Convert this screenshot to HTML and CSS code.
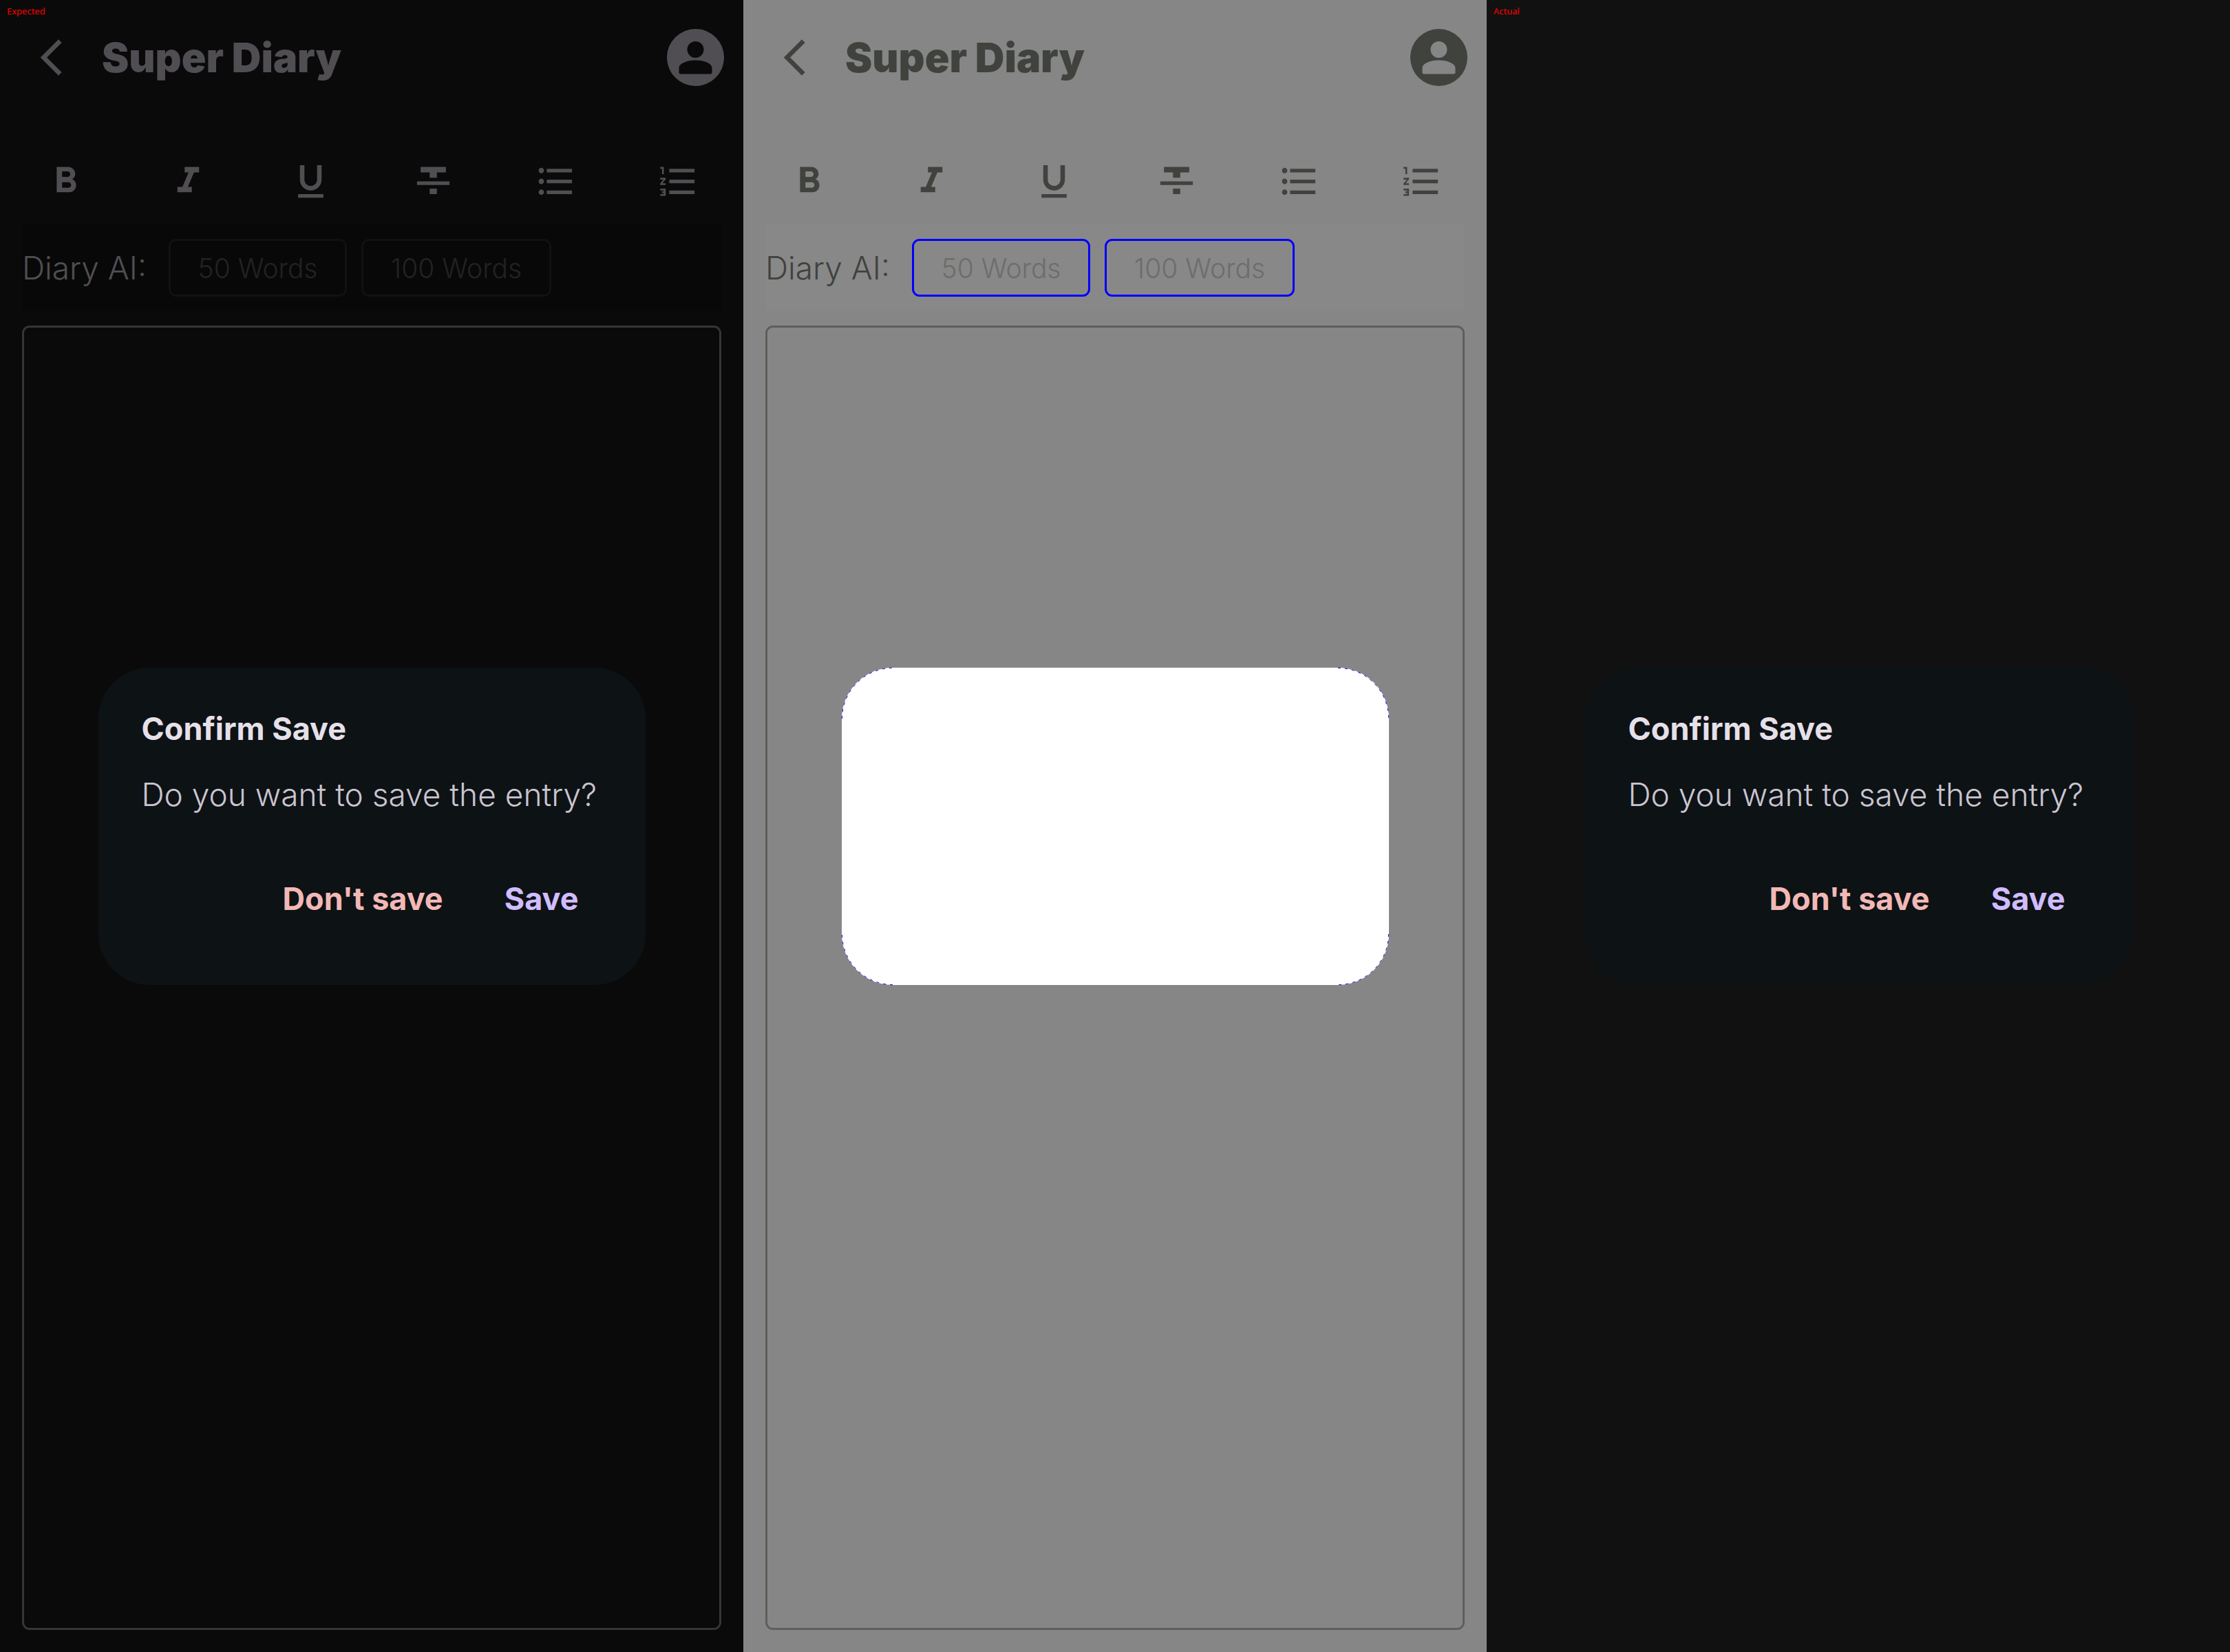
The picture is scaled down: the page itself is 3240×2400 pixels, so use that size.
FILE: index.html
```html
<!DOCTYPE html>
<html lang="en">
<head>
<meta charset="utf-8">
<title>Super Diary – save dialog comparison</title>
<link rel="stylesheet" href="styles.css">
</head>
<body>
<svg class="sprite" aria-hidden="true">
  <symbol id="back" viewBox="0 0 24 24"><path d="M17.77 3.77L16 2 6 12l10 10 1.77-1.77L9.54 12z"/></symbol>
  <symbol id="bold" viewBox="0 0 24 24"><path d="M15.6 10.79c.97-.67 1.65-1.77 1.65-2.79 0-2.26-1.75-4-4-4H7v14h7.04c2.09 0 3.71-1.7 3.71-3.79 0-1.52-.86-2.82-2.15-3.42zM10 6.5h3c.83 0 1.5.67 1.5 1.5s-.67 1.5-1.5 1.5h-3v-3zm3.5 9H10v-3h3.5c.83 0 1.5.67 1.5 1.5s-.67 1.5-1.5 1.5z"/></symbol>
  <symbol id="italic" viewBox="0 0 24 24"><path d="M10 4v3h2.21l-3.42 8H6v3h8v-3h-2.21l3.42-8H18V4z"/></symbol>
  <symbol id="underline" viewBox="0 0 24 24"><path d="M12 17c3.31 0 6-2.69 6-6V3h-2.5v8c0 1.93-1.57 3.5-3.5 3.5S8.5 12.93 8.5 11V3H6v8c0 3.31 2.69 6 6 6zm-7 2v2h14v-2H5z"/></symbol>
  <symbol id="strike" viewBox="0 0 24 24"><path d="M10 19h4v-3h-4v3zM5 4v3h5v3h4V7h5V4H5zM3 14h18v-2H3v2z"/></symbol>
  <symbol id="bullets" viewBox="0 0 24 24"><path d="M4 10.5c-.83 0-1.5.67-1.5 1.5s.67 1.5 1.5 1.5 1.5-.67 1.5-1.5-.67-1.5-1.5-1.5zm0-6c-.83 0-1.5.67-1.5 1.5S3.17 7.5 4 7.5 5.5 6.83 5.5 6 4.83 4.5 4 4.5zm0 12c-.83 0-1.5.68-1.5 1.5s.68 1.5 1.5 1.5 1.5-.68 1.5-1.5-.67-1.5-1.5-1.5zM7 19h14v-2H7v2zm0-6h14v-2H7v2zm0-8v2h14V5H7z"/></symbol>
  <symbol id="numbers" viewBox="0 0 24 24"><path d="M2 17h2v.5H3v1h1v.5H2v1h3v-4H2v1zm1-9h1V4H2v1h1v3zm-1 3h1.8L2 13.1v.9h3v-1H3.2L5 10.9V10H2v1zm5-6v2h14V5H7zm0 14h14v-2H7v2zm0-6h14v-2H7v2z"/></symbol>
  <symbol id="avatar" viewBox="0 0 83 83"><path fill-rule="evenodd" d="M41.5 0a41.5 41.5 0 1 1 0 83a41.5 41.5 0 1 1 0-83zM41.5 18a12 12 0 1 0 0 24a12 12 0 1 0 0-24zM17.5 57v6q0 2.500 2.500 2.500h43q2.500 0 2.500-2.500v-6c0-7-12-11.500-24-11.500s-24 4.500-24 11.500z"/></symbol>
</svg>
<main class="board">
  <section class="pane expected" aria-label="Expected">
    <span class="tag">Expected</span>
    <div class="screen">
      <header class="top">
        <button class="icon" aria-label="Back"><svg><use href="#back"/></svg></button>
        <h1>Super Diary</h1>
        <button class="avatar" aria-label="Account"><svg><use href="#avatar"/></svg></button>
      </header>
      <div class="tools">
        <button class="tool" aria-label="Bold"><svg><use href="#bold"/></svg></button>
        <button class="tool" aria-label="Italic"><svg><use href="#italic"/></svg></button>
        <button class="tool" aria-label="Underline"><svg><use href="#underline"/></svg></button>
        <button class="tool" aria-label="Strikethrough"><svg><use href="#strike"/></svg></button>
        <button class="tool" aria-label="Bulleted list"><svg><use href="#bullets"/></svg></button>
        <button class="tool" aria-label="Numbered list"><svg><use href="#numbers"/></svg></button>
      </div>
      <div class="ai">
        <span class="ai-label">Diary AI:</span>
        <button class="words">50 Words</button>
        <button class="words wide">100 Words</button>
      </div>
      <textarea class="entry" aria-label="Diary entry"></textarea>
    </div>
    <div class="overlay">
      <div class="dialog" role="dialog" aria-label="Confirm Save">
        <h2>Confirm Save</h2>
        <p>Do you want to save the entry?</p>
        <div class="actions">
          <button class="dont">Don't save</button>
          <button class="save">Save</button>
        </div>
      </div>
    </div>
  </section>
  <section class="pane diff" aria-label="Difference">
    <div class="screen">
      <header class="top">
        <button class="icon" aria-label="Back"><svg><use href="#back"/></svg></button>
        <h1>Super Diary</h1>
        <button class="avatar" aria-label="Account"><svg><use href="#avatar"/></svg></button>
      </header>
      <div class="tools">
        <button class="tool" aria-label="Bold"><svg><use href="#bold"/></svg></button>
        <button class="tool" aria-label="Italic"><svg><use href="#italic"/></svg></button>
        <button class="tool" aria-label="Underline"><svg><use href="#underline"/></svg></button>
        <button class="tool" aria-label="Strikethrough"><svg><use href="#strike"/></svg></button>
        <button class="tool" aria-label="Bulleted list"><svg><use href="#bullets"/></svg></button>
        <button class="tool" aria-label="Numbered list"><svg><use href="#numbers"/></svg></button>
      </div>
      <div class="ai">
        <span class="ai-label">Diary AI:</span>
        <button class="words">50 Words</button>
        <button class="words wide">100 Words</button>
      </div>
      <textarea class="entry" aria-label="Diary entry"></textarea>
    </div>
    <div class="overlay">
      <div class="dialog blank">
        <!-- pixels along the rounded corners that differ -->
        <svg class="corners" viewBox="0 0 795 461" aria-hidden="true">
          <path d="M.5 74A73.500 73.500 0 0 1 74 .5M721 .5A73.500 73.500 0 0 1 794.500 74M794.500 387A73.500 73.500 0 0 1 721 460.500M74 460.500A73.500 73.500 0 0 1 .5 387"/>
        </svg>
      </div>
    </div>
  </section>
  <section class="pane actual" aria-label="Actual">
    <span class="tag">Actual</span>
    <div class="overlay">
      <div class="dialog" role="dialog" aria-label="Confirm Save">
        <h2>Confirm Save</h2>
        <p>Do you want to save the entry?</p>
        <div class="actions">
          <button class="dont">Don't save</button>
          <button class="save">Save</button>
        </div>
      </div>
    </div>
  </section>
</main>
</body>
</html>
```
FILE: styles.css
```css
* {
  box-sizing: border-box;
}

body {
  margin: 0;
  background: #111;
  font-family: Inter, "Open Sans", sans-serif;
}

button {
  border: 0;
  padding: 0;
  background: none;
  color: inherit;
  font: inherit;
  white-space: nowrap;
}

svg {
  display: block;
  width: 63px;
  height: 63px;
  fill: currentColor;
}

.sprite {
  display: none;
}

.board {
  display: grid;
  grid-template-columns: repeat(3, 1fr);
  min-height: 100vh;
}

.pane {
  position: relative;
  display: flex;
  flex-direction: column;
}

.expected {
  --ink: #504e52;
  --row: #080808;
  --line: #353539;
  --button-line: #111;
  --button-ink: #222224;
  background: #0a0a0a;
}

.diff {
  --ink: #40423e;
  --row: #888;
  --line: #5e5f59;
  --button-line: #00f;
  --button-ink: #6d6d6b;
  background: #868686;
}

.actual {
  background: #111;
}

.tag {
  position: absolute;
  top: 8px;
  left: 10px;
  color: #f00;
  font: 13px/16px "Noto Sans", sans-serif;
}

.screen {
  flex: 1;
  display: flex;
  flex-direction: column;
  padding: 42px 32px 32px;
  color: var(--ink);
}

.top {
  display: flex;
  align-items: center;
  gap: 42px;
  height: 83px;
  margin: 0 -4px 75px 11px;
}

h1 {
  flex: 1;
  margin: 0;
  font-size: 59px;
  font-weight: 900;
  line-height: 80px;
}

.avatar svg {
  width: 83px;
  height: 83px;
}

.tools {
  display: flex;
  justify-content: space-between;
}

.tool {
  display: grid;
  place-items: center;
  width: 126px;
  height: 126px;
}

.ai {
  display: flex;
  align-items: center;
  gap: 21px;
  height: 126px;
  margin-bottom: 21px;
  background: var(--row);
}

.ai-label {
  width: 192px;
  font-size: 46px;
  font-weight: 300;
  white-space: nowrap;
}

.words {
  width: 259px;
  height: 84px;
  border: 3px solid var(--button-line);
  border-radius: 11px;
  color: var(--button-ink);
  font-size: 39px;
  font-weight: 300;
}

.words.wide {
  width: 276px;
}

.entry {
  flex: 1;
  display: block;
  width: 100%;
  border: 3px solid var(--line);
  border-radius: 11px;
  background: none;
  color: inherit;
  font: inherit;
  resize: none;
}

.overlay {
  position: absolute;
  inset: 0;
  display: grid;
  place-items: center;
}

.dialog {
  width: 795px;
  min-height: 461px;
  padding: 63px 63px 62px;
  border-radius: 74px;
  background: #0d1215;
  font-size: 46px;
  line-height: 52px;
}

.dialog.blank {
  padding: 0;
  background: #fff;
}

.corners {
  width: 100%;
  height: auto;
  fill: none;
  stroke: #00f;
  stroke-dasharray: 4 6;
}

h2 {
  margin: 0 0 43px;
  color: #e6e0e9;
  font-size: 45px;
  font-weight: 700;
}

p {
  margin: 0 0 63px;
  color: #cac4d0;
  font-weight: 300;
  white-space: nowrap;
}

.actions {
  display: flex;
  justify-content: flex-end;
  gap: 21px;
  font-size: 45px;
  font-weight: 700;
}

.actions button {
  height: 126px;
  padding: 0 34px;
}

.dont {
  color: #f2b8b5;
}

.save {
  color: #d0bcff;
}
```
